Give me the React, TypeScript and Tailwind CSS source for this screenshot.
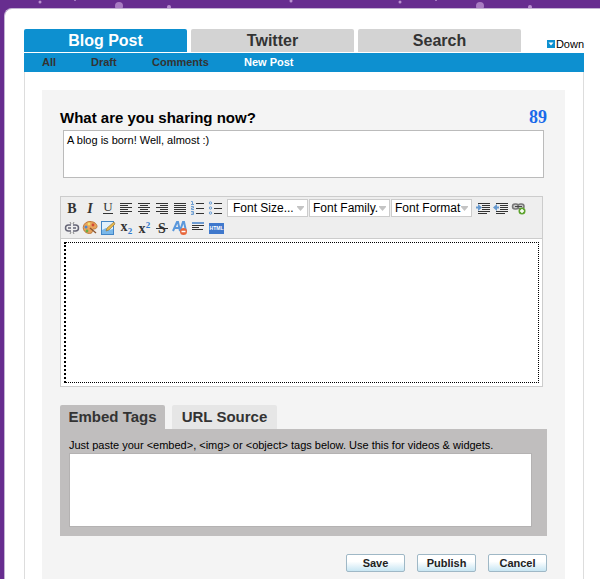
import type { ReactNode } from "react"

const tabs = ["Blog Post", "Twitter", "Search"]

const subTabs = [
  { label: "All", className: "w-[49px]" },
  { label: "Draft", className: "w-[61px]" },
  { label: "Comments", className: "w-[92px]" },
  { label: "New Post", className: "text-white" },
]

function Lines({ rows, color = "#333" }: { rows: number[][]; color?: string }) {
  return (
    <>
      {rows.map(([x, y, w]) => (
        <rect key={`${x}-${y}`} x={x} y={y} width={w} height="1" fill={color} />
      ))}
    </>
  )
}

interface GlyphProps {
  x: number
  y: number
  size: number
  children: string
  color?: string
  italic?: boolean
  bold?: boolean
}

function Glyph({ x, y, size, children, color = "#333", italic, bold }: GlyphProps) {
  return (
    <text
      x={x}
      y={y}
      fontSize={size}
      fill={color}
      textAnchor="middle"
      fontFamily="'Liberation Serif', serif"
      fontStyle={italic ? "italic" : "normal"}
      fontWeight={bold ? "bold" : "normal"}
    >
      {children}
    </text>
  )
}

const rows = [4, 6, 8, 10, 12, 14]

const listLines = <Lines rows={[[7, 4, 8], [7, 9, 8], [7, 14, 8]]} />

const indentLines = <Lines rows={[[4, 4, 12], [8, 6, 8], [8, 8, 8], [8, 10, 8], [4, 12, 12], [4, 14, 9]]} />

const listIcons: [string, ReactNode][] = [
  ["Bold", <Glyph x={9} y={14} size={14} bold>B</Glyph>],
  ["Italic", <Glyph x={9} y={14} size={14} bold italic>I</Glyph>],
  ["Underline", <><Glyph x={9} y={12} size={13}>U</Glyph><Lines rows={[[4, 14, 10]]} /></>],
  ["Align left", <Lines rows={rows.map((y, i) => [3, y, i % 2 ? 8 : 12])} />],
  ["Align center", <Lines rows={rows.map((y, i) => [i % 2 ? 5 : 3, y, i % 2 ? 8 : 12])} />],
  ["Align right", <Lines rows={rows.map((y, i) => [i % 2 ? 7 : 3, y, i % 2 ? 8 : 12])} />],
  ["Justify", <Lines rows={rows.map((y) => [3, y, 12])} />],
  ["Numbered list", (
    <>
      {listLines}
      <path d="M2 2.5h1.5v3M2 5.500h3M2 7.500h2.500v1.500H2.500v1.500H5M2 12.500h2.500v3H2M2.500 14h2" fill="none" stroke="#6f9fd2" />
    </>
  )],
  ["Bulleted list", (
    <>
      {listLines}
      <g fill="#d9e8f8" stroke="#6f9fd2">
        <circle cx="3.5" cy="4" r="1.2" />
        <circle cx="3.5" cy="9" r="1.2" />
        <circle cx="3.5" cy="14" r="1.2" />
      </g>
    </>
  )],
]

const indentIcons: [string, ReactNode][] = [
  ["Indent", <>{indentLines}<path d="M4 5l4 3.5L4 12v-2.500H2v-2h2z" fill="#6699cf" /></>],
  ["Outdent", <>{indentLines}<path d="M5 5L1 8.500 5 12v-2.500h2v-2H5z" fill="#6699cf" /></>],
  ["Add link", (
    <>
      <g fill="#c8c8c8" stroke="#777" strokeWidth="1.5">
        <rect x="2.5" y="5" width="6" height="5" rx="2.5" />
        <rect x="8" y="5" width="6" height="5" rx="2.5" />
      </g>
      <path d="M5 7.5h7" stroke="#444" />
      <circle cx="12" cy="12" r="3.5" fill="#5da32e" />
      <path d="M12 10v4M10 12h4" stroke="#fff" strokeWidth="1.5" />
    </>
  )],
]

const secondRow: [string, ReactNode][] = [
  ["Remove link", (
    <>
      <path d="M8 6H5.500a3 3 0 0 0 0 6H8M10 6h2.500a3 3 0 0 1 0 6H10M5 9h3M10 9h3" fill="none" stroke="#667" strokeWidth="1.5" />
      <path d="M7 3l1 2M11 3l-1 2M7 15l1-2M11 15l-1-2" stroke="#888" />
    </>
  )],
  ["Text color", (
    <>
      <path d="M9 2.5c4 0 7 2.300 7 5 0 2-2 2.500-3.500 2.500-1.500.2-.5 2-1.500 3.500-1 1.300-4 1.200-6 0-5-3-3-11 4-11z" fill="#e8a35c" stroke="#c07a3a" />
      <circle cx="5" cy="8" r="1.5" fill="#4b86d0" />
      <circle cx="8" cy="5" r="1.4" fill="#f4e06a" />
      <circle cx="12" cy="6" r="1.4" fill="#d24a35" />
      <circle cx="6" cy="12" r="1.4" fill="#68ad48" />
      <path d="M9 9l6 5" stroke="#8a5530" strokeWidth="1.3" />
    </>
  )],
  ["Edit image", (
    <>
      <rect x="2.5" y="2.5" width="12" height="13" fill="#e0f0fc" stroke="#4285c6" />
      <path d="M3 11l4-2 3 2 4-1v5H3z" fill="#7ab8ea" />
      <path d="M7 12l1-3 7-6 1 2-6 6z" fill="#e5b64c" stroke="#8b713c" strokeWidth=".6" />
    </>
  )],
  ["Subscript", (
    <>
      <Glyph x={7} y={12} size={14} bold>x</Glyph>
      <Glyph x={13} y={15} size={9} color="#2f78cc" bold>2</Glyph>
    </>
  )],
  ["Superscript", (
    <>
      <Glyph x={7} y={14} size={14} bold>x</Glyph>
      <Glyph x={13} y={9} size={9} color="#2f78cc" bold>2</Glyph>
    </>
  )],
  ["Strikethrough", <><Glyph x={9} y={14} size={14} bold>S</Glyph><Lines rows={[[3, 9, 12]]} /></>],
  ["Remove formatting", (
    <>
      <path d="M2 12L6 3h1l2 9M4 9h5M9 12l3-9h1l2 9" fill="none" stroke="#5a98dc" strokeWidth="2" />
      <circle cx="12.5" cy="12.5" r="3.5" fill="#e8663a" />
      <path d="M10.500 12.500h4" stroke="#fff" strokeWidth="1.5" />
    </>
  )],
  ["Horizontal rule", (
    <>
      <rect x="3" y="3" width="12" height="2" fill="#6d9bd1" />
      <Lines rows={[[3, 6, 12], [3, 8, 7], [3, 10, 11]]} />
    </>
  )],
]

function ToolButtons({ items }: { items: [string, ReactNode][] }) {
  return (
    <>
      {items.map(([label, icon]) => (
        <button key={label} type="button" aria-label={label} title={label} className="h-5 w-[18px]">
          <svg width="18" height="18" viewBox="0 0 18 18" aria-hidden="true">{icon}</svg>
        </button>
      ))}
    </>
  )
}

function FontSelect({ label, indent }: { label: string; indent: string }) {
  return (
    <div className="relative h-[18px] w-[81px]">
      <select aria-label={label} className={`block h-full w-full appearance-none border border-[#ccc] bg-white text-xs text-black ${indent}`}>
        <option>{label}</option>
      </select>
      <svg className="pointer-events-none absolute top-[7px] right-1" width="7" height="5" viewBox="0 0 7 5" aria-hidden="true">
        <path d="M0 0h7v1L3.500 5 0 1z" fill="#c4c4c4" />
      </svg>
    </div>
  )
}

function Sky() {
  return (
    <svg className="block h-2 w-full" aria-hidden="true">
      <g fill="#b98fd0">
        <circle cx="40" cy="2" r="1.5" />
        <circle cx="75" cy="0" r="1" />
        <circle cx="119" cy="6" r="4" opacity=".8" />
        <circle cx="169" cy="7" r="2" />
        <circle cx="291" cy="1" r="1.5" />
        <circle cx="400" cy="2" r="1.5" />
        <circle cx="436" cy="0" r="1" />
        <circle cx="480" cy="6" r="4" opacity=".8" />
        <circle cx="530" cy="7" r="2" />
      </g>
    </svg>
  )
}

export default function App() {
  return (
    <div className="flex min-h-screen flex-col bg-[#672d8f] font-['Liberation_Sans',Arial,sans-serif] text-black">
      <Sky />
      <main className="ml-1 flex flex-1 flex-col rounded-tl-lg border-t border-l border-[#c3b3d3] bg-white pt-5 pr-4 pl-[19px]">
        <nav className="flex items-end justify-between">
          <div className="flex flex-1 gap-1">
            {tabs.map((tab, i) => (
              <button
                key={tab}
                type="button"
                className={`h-[23px] flex-1 rounded-t-xs text-base font-bold ${i === 0 ? "bg-[#0d90d0] text-white" : "bg-[#d3d3d3] text-[#333]"}`}
              >
                {tab}
              </button>
            ))}
          </div>
          <a href="#down" className="flex w-[63px] items-center justify-end text-[11px] leading-4">
            <svg width="9" height="9" viewBox="0 0 9 9" aria-hidden="true">
              <rect width="8" height="8" fill="#0d90d0" />
              <path d="M1.500 2.500h5L4 5.500z" fill="#fff" />
            </svg>
            Down
          </a>
        </nav>

        <div className="mt-px flex h-[19px] items-center bg-[#0d90d0] pl-[18px] text-[11px] font-bold text-[#333]">
          {subTabs.map((item) => (
            <a key={item.label} href="#posts" className={item.className}>{item.label}</a>
          ))}
        </div>

        <section className="flex flex-1 flex-col border-x border-[#ddd] pt-[18px] pr-[18px] pl-[17px]">
          <form className="flex flex-1 flex-col bg-[#f4f4f4] px-[18px] pt-[18px] pb-[7px]">
            <div className="flex h-[22px] items-start justify-between">
              <label htmlFor="title" className="text-[15px] leading-[19px] font-bold">What are you sharing now?</label>
              <span className="font-['Liberation_Serif',serif] text-lg leading-[18px] font-bold text-[#1a6aea]">89</span>
            </div>
            <textarea
              id="title"
              className="mx-[3px] h-12 resize-none border border-[#bbb] bg-white px-[3px] py-[3px] text-[11px] leading-[13px]"
              defaultValue="A blog is born! Well, almost :)"
            />

            <div className="mt-[18px] mr-1 border border-[#ccc] bg-[#eee]">
              <div className="border-b border-[#ccc] px-[2px] pt-px">
                <div className="flex h-5 items-center">
                  <ToolButtons items={listIcons} />
                  <div className="mx-[2px] flex gap-px">
                    <FontSelect label="Font Size..." indent="pl-[5px]" />
                    <FontSelect label="Font Family." indent="pl-[3px]" />
                    <FontSelect label="Font Format" indent="pl-[3px]" />
                  </div>
                  <ToolButtons items={indentIcons} />
                </div>
                <div className="flex h-5 items-center">
                  <ToolButtons items={secondRow} />
                  <button type="button" aria-label="HTML" className="ml-[2px] flex h-[11px] w-[15px] items-center justify-center bg-[#3f78cc] text-[5px] leading-none font-bold text-white">HTML</button>
                </div>
              </div>
              <div className="bg-white p-[3px]">
                <textarea aria-label="Post body" className="block h-[141px] w-full resize-none border border-l-2 border-dotted border-black bg-white" />
              </div>
            </div>

            <div className="mt-[18px] flex gap-[7px] text-[15px] font-bold text-[#333]">
              <button type="button" className="h-6 w-[105px] rounded-t-xs bg-[#c0bebe]">Embed Tags</button>
              <button type="button" className="h-6 w-[105px] rounded-t-xs bg-[#e6e6e6]">URL Source</button>
            </div>
            <div className="bg-[#c0bebe] px-[9px] pt-2 pb-[9px]">
              <label htmlFor="embed" className="block text-[11px] leading-4">
                Just paste your &lt;embed&gt;, &lt;img&gt; or &lt;object&gt; tags below. Use this for videos &amp; widgets.
              </label>
              <div className="pr-[6px]">
                <textarea id="embed" className="block h-[74px] w-full resize-none border border-[#b4b2b2] bg-white" />
              </div>
            </div>

            <div className="mt-[18px] flex justify-end gap-3 text-[11px] font-bold text-[#222]">
              {["Save", "Publish", "Cancel"].map((label) => (
                <button
                  key={label}
                  type="button"
                  className="h-[18px] w-[59px] rounded-xs border border-[#9fb8c6] bg-linear-to-b from-white from-40% to-[#c8e6f3]"
                >
                  {label}
                </button>
              ))}
            </div>
          </form>
        </section>
      </main>
    </div>
  )
}
